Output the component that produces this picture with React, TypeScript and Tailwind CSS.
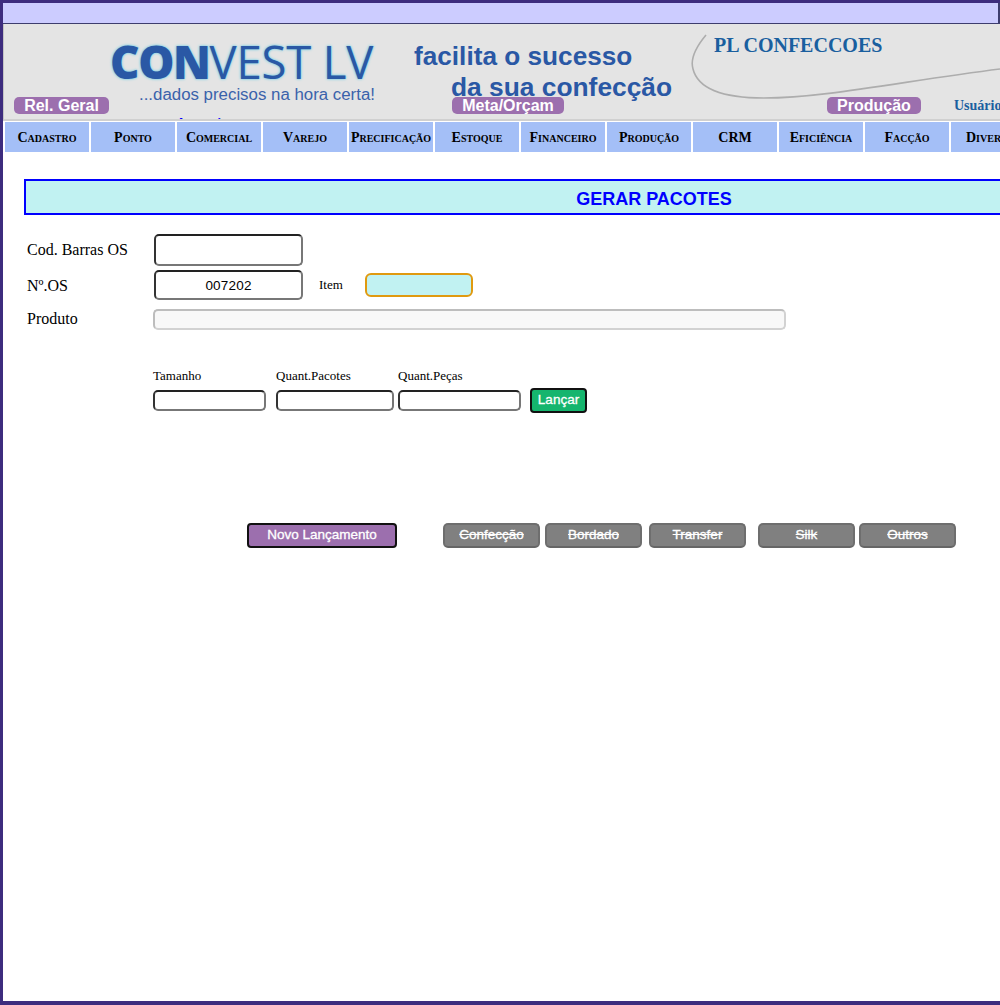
import React from "react";

const menuItems = ["Cadastro", "Ponto", "Comercial", "Varejo", "Precificação", "Estoque", "Financeiro", "Produção", "CRM", "Eficiência", "Facção", "Diversos"];
const disabledButtons = [
  { label: "Confecção", cls: "w-[97px]" },
  { label: "Bordado", cls: "w-[97px] ml-[5px]" },
  { label: "Transfer", cls: "w-[97px] ml-[7px]" },
  { label: "Silk", cls: "w-[97px] ml-[12px]" },
  { label: "Outros", cls: "w-[97px] ml-[4px]" },
];

function Pill({ children, className }: { children: React.ReactNode; className: string }) {
  return (
    <div className={`absolute top-[73px] h-[17px] rounded-[5px] bg-[#9c6fae] text-white font-bold text-[16px] leading-[17px] text-center font-['Liberation_Sans',sans-serif] ${className}`}>
      {children}
    </div>
  );
}

function TextBox({ className, value }: { className: string; value?: string }) {
  return (
    <input
      readOnly
      value={value ?? ""}
      className={`border-2 border-t-[#222] border-l-[#333] border-r-[#777] border-b-[#777] rounded-[5px] bg-white text-center text-[13.5px] tracking-[0.2px] text-black font-['Liberation_Sans',sans-serif] outline-none ${className}`}
    />
  );
}

export default function App() {
  return (
    <div className="w-[1000px] h-[1005px] overflow-hidden bg-white border-[3px] border-b-[4px] border-[#3d2c7e] border-r-0 flex flex-col font-['Liberation_Serif',serif]">
      <div className="h-[21px] shrink-0 bg-[#ccccff] border-b border-r-2 border-[#3d3d6e]" />

      {/* banner */}
      <div className="relative h-[97px] w-[997px] shrink-0 bg-[#e4e4e4] border-l border-[#c4c4c4] border-b-2 border-b-[#d0d0d0]">
        <div className="absolute left-[106px] top-[15px] whitespace-nowrap text-[45.5px] leading-[44px] text-[#2a58a5] font-['Open_Sans',sans-serif] tracking-[-0.2px] [text-shadow:0_0_3px_#7fd0e4,0_0_2px_#7fd0e4]">
          <span className="font-extrabold tracking-[-1.4px]">CON</span>
          <span className="font-normal">VEST LV</span>
        </div>
        <div className="absolute left-[135px] top-[61px] whitespace-nowrap text-[16.85px] leading-[20px] text-[#3a62ab] font-['Liberation_Sans',sans-serif]">...dados precisos na hora certa!</div>
        <div className="absolute left-[410px] top-[17px] whitespace-nowrap text-[26.2px] leading-[30px] font-bold text-[#2a58a5] font-['Liberation_Sans',sans-serif]">facilita o sucesso</div>
        <div className="absolute left-[447px] top-[50px] whitespace-nowrap text-[26.35px] leading-[26px] font-bold text-[#2a58a5] font-['Liberation_Sans',sans-serif]">da sua confecção</div>
        <svg className="absolute left-[680px] top-[5px]" width="317" height="90" viewBox="0 0 317 90" fill="none">
          <path d="M22 6 C12 18 6 30 9 40 C14 60 40 69 80 69 C140 69 220 52 316 40" stroke="#adadad" strokeWidth="1.6" />
        </svg>
        <div className="absolute left-[710px] top-[10px] whitespace-nowrap text-[20px] leading-[22px] font-bold text-[#1a5f9f]">PL CONFECCOES</div>
        <Pill className="left-[10px] w-[95px]">Rel. Geral</Pill>
        <Pill className="left-[448px] w-[112px]">Meta/Orçam</Pill>
        <Pill className="left-[823px] w-[94px]">Produção</Pill>
        <div className="absolute left-[950px] top-[74px] whitespace-nowrap text-[14px] leading-[16px] font-bold text-[#1a5f9f]">Usuário</div>
        <div className="absolute left-[172px] top-[92px] h-[3px] w-[50px] overflow-hidden whitespace-nowrap text-[14px] leading-[16px] font-bold text-[#0000ff]">Autenticar</div>
      </div>

      {/* menu */}
      <div className="flex shrink-0 pl-[2px] pt-[1px] gap-[2px] overflow-hidden">
        {menuItems.map((m) => (
          <div key={m} className="w-[84px] h-[30px] shrink-0 bg-[#a4bff7] flex items-center justify-center overflow-hidden whitespace-nowrap text-[14px] font-bold text-black [font-variant:small-caps]">
            {m}
          </div>
        ))}
      </div>

      {/* title */}
      <div className="ml-[21px] mt-[27px] w-[1260px] h-[36px] shrink-0 bg-[#c1f2f2] border-2 border-[#0000ff] flex items-center justify-center pt-[5px] text-[18px] font-bold text-[#0000ff] font-['Liberation_Sans',sans-serif]">
        GERAR PACOTES
      </div>

      {/* form */}
      <div className="flex items-center mt-[19px] h-[32px] shrink-0">
        <label className="ml-[24px] w-[127px] text-[16px] text-black">Cod. Barras OS</label>
        <TextBox className="w-[149px] h-[32px]" />
      </div>
      <div className="flex items-center mt-[4px] h-[30px] shrink-0">
        <label className="ml-[24px] w-[127px] pt-[1px] text-[16px] text-black">Nº.OS</label>
        <TextBox className="w-[149px] h-[30px]" value="007202" />
        <label className="ml-[16px] w-[46px] text-[13px] text-black">Item</label>
        <input readOnly className="w-[108px] h-[24px] rounded-[6px] border-2 border-[#e09a10] bg-[#c1f2f2] outline-none" />
      </div>
      <div className="flex items-center mt-[9px] h-[21px] shrink-0">
        <label className="ml-[24px] w-[126px] pb-[2px] text-[16px] text-black">Produto</label>
        <input readOnly disabled className="w-[633px] h-[21px] rounded-[5px] border-2 border-t-[#bdbdbd] border-l-[#bdbdbd] border-r-[#d2d2d2] border-b-[#d2d2d2] bg-[#f8f8f8]" />
      </div>

      <div className="flex ml-[150px] mt-[39px] text-[13px] leading-[14px] text-black shrink-0">
        <span className="w-[123px]">Tamanho</span>
        <span className="w-[122px]">Quant.Pacotes</span>
        <span>Quant.Peças</span>
      </div>
      <div className="flex items-center ml-[150px] mt-[5px] shrink-0">
        <TextBox className="w-[113px] h-[21px]" />
        <TextBox className="w-[118px] h-[21px] ml-[10px]" />
        <TextBox className="w-[123px] h-[21px] ml-[4px]" />
        <button className="ml-[9px] w-[57px] h-[25px] rounded-[4px] border-2 border-[#111] bg-[#15b56e] text-white text-[13.5px] font-['Liberation_Sans',sans-serif] [-webkit-text-stroke:0.3px_white]">Lançar</button>
      </div>

      <div className="flex items-center ml-[244px] mt-[110px] shrink-0 font-['Liberation_Sans',sans-serif] text-[13.5px] text-white [-webkit-text-stroke:0.3px_white]">
        <button className="w-[150px] h-[25px] rounded-[4px] border-2 border-[#111] bg-[#9c6fae]">Novo Lançamento</button>
        <div className="flex ml-[46px]">
          {disabledButtons.map((b) => (
            <button key={b.label} disabled className={`h-[25px] rounded-[5px] border-2 border-[#6e6e6e] border-b-[#666] bg-[#808080] line-through ${b.cls}`}>
              {b.label}
            </button>
          ))}
        </div>
      </div>
    </div>
  );
}
